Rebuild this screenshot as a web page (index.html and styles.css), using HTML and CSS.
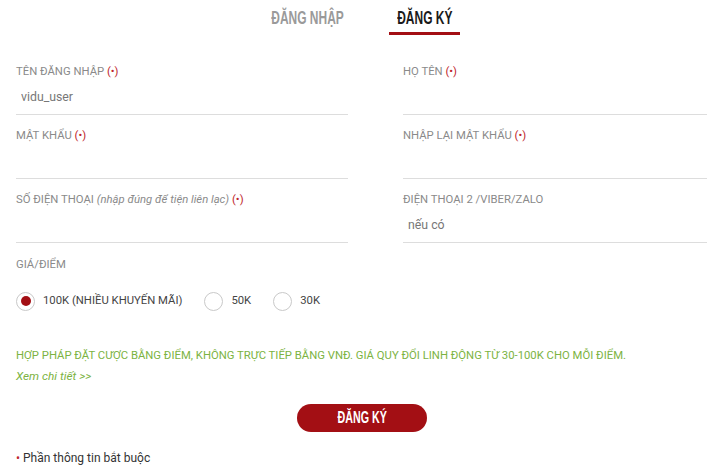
FILE: index.html
```html
<!DOCTYPE html>
<html lang="vi">

<head>
  <meta charset="UTF-8">
  <title>Đăng ký</title>
  <link rel="stylesheet" href="styles.css">
</head>

<body>
  <div class="tabs">
    <a class="tab tab-login" href="javascript:void(0)"><span>ĐĂNG NHẬP</span></a>
    <a class="tab tab-reg active" href="javascript:void(0)"><span>ĐĂNG KÝ</span></a>
  </div>

  <form class="reg-form">
    <div class="fields">
      <div class="field">
        <label>TÊN ĐĂNG NHẬP <span class="req">(•)</span></label>
        <input type="text" placeholder="vidu_user">
      </div>
      <div class="field">
        <label>HỌ TÊN <span class="req">(•)</span></label>
        <input type="text">
      </div>
      <div class="field">
        <label>MẬT KHẨU <span class="req">(•)</span></label>
        <input type="password">
      </div>
      <div class="field">
        <label>NHẬP LẠI MẬT KHẨU <span class="req">(•)</span></label>
        <input type="password">
      </div>
      <div class="field">
        <label>SỐ ĐIỆN THOẠI <em>(nhập đúng để tiện liên lạc)</em> <span class="req">(•)</span></label>
        <input type="text">
      </div>
      <div class="field">
        <label>ĐIỆN THOẠI 2 /VIBER/ZALO</label>
        <input type="text" placeholder="nếu có">
      </div>
    </div>

    <div class="price">
      <label>GIÁ/ĐIỂM</label>
      <div class="radios">
        <span class="radio checked"><i></i>100K (NHIỀU KHUYẾN MÃI)</span>
        <span class="radio"><i></i>50K</span>
        <span class="radio"><i></i>30K</span>
      </div>
    </div>

    <p class="note">HỢP PHÁP ĐẶT CƯỢC BẰNG ĐIỂM, KHÔNG TRỰC TIẾP BẰNG VNĐ. GIÁ QUY ĐỔI LINH ĐỘNG TỪ 30-100K CHO MỖI ĐIỂM.</p>
    <a class="more" href="javascript:void(0)">Xem chi tiết &gt;&gt;</a>

    <div class="submit">
      <a class="btn" href="javascript:void(0)"><span>ĐĂNG KÝ</span></a>
    </div>

    <p class="footnote"><span class="dot">•</span> Phần thông tin bắt buộc</p>
  </form>
</body>

</html>
```

FILE: styles.css
```css
body,
p,
form,
input {
  margin: 0;
  padding: 0;
}

a {
  text-decoration: none;
  outline: none;
}

body {
  font: 11.3px/1.4 Roboto, "Liberation Sans", sans-serif;
  color: #888;
  background: #fff;
}

/* tab dang nhap / dang ky */
.tabs {
  display: flex;
  justify-content: center;
  gap: 39px;
  padding: 6px 0 0 5px;
}

.tab {
  display: flex;
  justify-content: center;
  padding-bottom: 2px;
  font: 700 19px/24px "Liberation Sans", sans-serif;
  color: #9a9a9a;
  border-bottom: 3px solid transparent;
  white-space: nowrap;
}

/* khong co font condensed nen ep chu lai */
.tab span,
.btn span {
  display: inline-block;
  transform: scaleX(0.63);
}

.tab-login {
  width: 85px;
}

.tab-reg {
  width: 71px;
}

.tab.active {
  color: #1a1a1a;
  border-bottom-color: #a30f14;
}

.reg-form {
  padding: 0 0 0 16px;
}

.fields {
  display: grid;
  grid-template-columns: 332px 304px;
  column-gap: 55px;
  row-gap: 13px;
  padding-top: 29px;
}

.field label,
.price label {
  display: block;
  line-height: 16px;
  color: #8a8a8a;
}

.field em {
  font-style: italic;
}

.req {
  color: #c0272d;
}

.field input {
  display: block;
  width: 100%;
  height: 35px;
  box-sizing: border-box;
  border: 0;
  border-bottom: 1px solid #ddd;
  padding: 0 5px 1px;
  font: 12.3px Roboto, "Liberation Sans", sans-serif;
  color: #777;
  outline: none;
}

.field input::placeholder {
  color: #777;
}

.price {
  padding-top: 14px;
}

.radios {
  display: flex;
  align-items: center;
  gap: 22px;
  padding-top: 18px;
  color: #444;
}

.radio {
  display: flex;
  align-items: center;
  gap: 8px;
  line-height: 20px;
}

.radio i {
  display: block;
  width: 19px;
  height: 19px;
  box-sizing: border-box;
  border: 1px solid #c9c9c9;
  border-radius: 50%;
  position: relative;
}

.radio.checked i::after {
  content: "";
  position: absolute;
  left: 3.5px;
  top: 3.5px;
  width: 10px;
  height: 10px;
  border-radius: 50%;
  background: #a30f14;
}

.note {
  margin-top: 35px;
  line-height: 20px;
  color: #7cb342;
}

.more {
  display: block;
  line-height: 20px;
  font-size: 11.8px;
  font-style: italic;
  color: #7cb342;
}

.submit {
  display: flex;
  justify-content: center;
  padding: 18px 12px 0 0;
}

.btn {
  display: flex;
  justify-content: center;
  width: 130px;
  height: 28px;
  border-radius: 14px;
  background: #a30f14;
  color: #fff;
  white-space: nowrap;
  font: 700 17px/28px "Liberation Sans", sans-serif;
}

.footnote {
  margin-top: 18px;
  font-size: 12px;
  color: #333;
}

.footnote .dot {
  color: #c0272d;
}
```
